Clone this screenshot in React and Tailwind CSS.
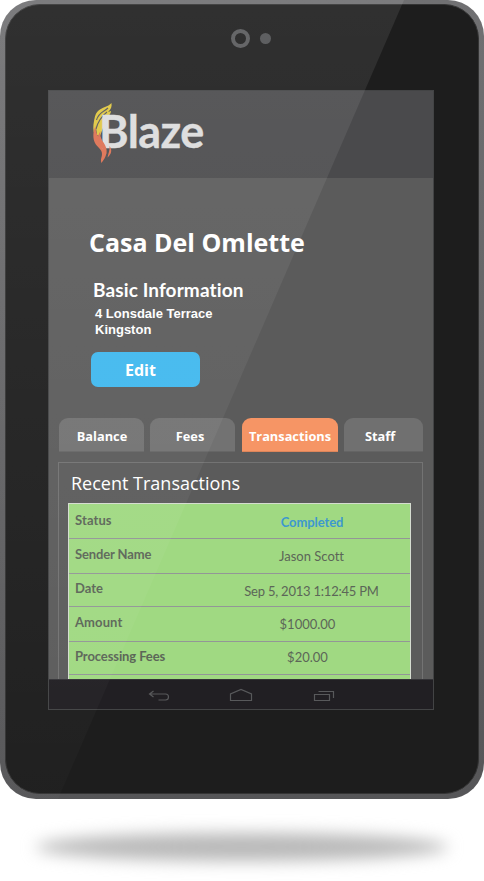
import React from 'react';

const rows = [
  { label: 'Status', value: 'Completed', h: 'h-[34px]', v: 'text-[#3d98cf] font-bold tracking-[-0.1px] pt-[8px] pr-[8px]', l: 'pt-[6px] tracking-[0.1px]' },
  { label: 'Sender Name', value: 'Jason Scott', h: 'h-[34px]', v: 'pt-[7px] pr-[9px]', l: 'pt-[5px] tracking-[-0.12px]' },
  { label: 'Date', value: 'Sep 5, 2013 1:12:45 PM', h: 'h-[32px]', v: 'pt-[7px] pr-[9px] tracking-[-0.22px]', l: 'pt-[4px]' },
  { label: 'Amount', value: '$1000.00', h: 'h-[34px]', v: 'pt-[7px] pr-[17px]', l: 'pt-[5px] tracking-[0.1px]' },
  { label: 'Processing Fees', value: '$20.00', h: 'h-[32px]', v: 'pt-[5px] pr-[17px]', l: 'pt-[4px] tracking-[-0.1px]' },
];

const tabs = [
  { name: 'Balance', style: 'w-[85px] mr-[6px] pl-[1px] bg-[#747474]/90' },
  { name: 'Fees', style: 'w-[85px] mr-[7px] pr-[5px] bg-[#747474]/90' },
  { name: 'Transactions', style: 'w-[96px] mr-[6px] bg-[#f69565]' },
  { name: 'Staff', style: 'w-[79px] pr-[7px] bg-[#707070]' },
];

function Logo() {
  return (
    <div className="relative ml-[44px] mt-[12px] h-[62px] w-[116px]">
      <svg className="absolute left-0 top-0" width="22" height="62" viewBox="0 0 22 62">
        <path fill="#dfc63f" d="M18.500 0C15 4 9 4 5 8C2 11 2 14 1 18C0 23 0 28 1.500 31L3 25L4 32L7 33L10 25L14 18L10 19C14 15 18 11 18 8L15 9C18 6 19 4 18.500 0Z" />
        <path fill="none" stroke="#58585a" strokeWidth="1.100" d="M15 5C11 9 6 9 3.500 17M14 9C9 13 5 18 3 26" />
        <path fill="#dd7051" d="M2.500 23C0 28 -0.500 35 2 40C4 44 9 46 9 51C9 54 7 57 8.500 60C11 56 14 53 13 49C12 44 7 41 6 36C5 32 2 29 2.500 23Z" />
      </svg>
      <span className="absolute left-[6px] top-[6px] font-[Lato] text-[45px] font-bold leading-[44px] tracking-[-0.55px] text-[#dcdcdd] [-webkit-text-stroke:0.4px_#dcdcdd]">Blaze</span>
      <svg className="absolute left-0 top-0" width="22" height="62" viewBox="0 0 22 62">
        <path fill="#dd7051" d="M7.500 28C6 34 10 38 12 42C14 46 14 49 13 52C10 49 11 46 7.500 43C4 38 4 33 7.500 28Z" />
        <path fill="#dd7051" d="M16.500 43C19.500 47 18.500 51 14.500 54.500C15.500 50 17 47 16.500 43Z" />
      </svg>
    </div>
  );
}

function NavBar() {
  return (
    <nav className="h-[30px] shrink-0 border-t border-[#343337] bg-[#211f23]">
      <svg width="383" height="29" viewBox="0 0 383 29" fill="none" stroke="#58595b" strokeWidth="1.2">
        <path d="M104.500 11L100.500 14L104.500 17M100.500 14H116.500Q119.500 14 119.500 17Q119.500 20 116.500 20H109.500" />
        <path d="M181.500 20.500V14L192 9.500L202.500 14V20.500Z" />
        <path d="M265.500 14.500H280.500V20.500H265.500ZM269.500 11.500H284.500V18" />
      </svg>
    </nav>
  );
}

function Screen() {
  return (
    <div className="flex h-[620px] w-[386px] flex-col overflow-hidden border border-[#434445] bg-[#5b5b5b] [font-variant-ligatures:none]">
      <header className="h-[87px] shrink-0 bg-[#4a4a4c]">
        <div className="flex"><Logo /></div>
      </header>
      <main className="min-h-0 flex-1 overflow-hidden text-white">
        <h1 className="ml-[40px] mt-[46px] whitespace-nowrap font-['Open_Sans'] text-[25px] font-bold leading-[36px]">Casa Del Omlette</h1>
        <h2 className="ml-[44px] mt-[18px] font-[Lato] text-[19px] font-bold leading-[24px] tracking-[0.12px]">Basic Information</h2>
        <p className="ml-[46px] mt-[4px] font-['Liberation_Sans'] text-[13px] font-bold leading-[16px]">4 Lonsdale Terrace<br />Kingston</p>
        <button className="ml-[42px] mt-[14px] block h-[35px] w-[109px] rounded-[7px] bg-[#40b8ee] pr-[10px] pt-[2px] text-center font-['Open_Sans'] text-[16px] font-bold leading-[33px]">Edit</button>
        <div className="ml-[10px] mt-[31px] flex h-[34px] font-['Open_Sans'] text-[12.8px] font-bold">
          {tabs.map((t) => (
            <div key={t.name} className={`flex items-center justify-center rounded-t-[9px] border-b border-black/10 pt-[4px] ${t.style}`}>{t.name}</div>
          ))}
        </div>
        <section className="ml-[9px] mt-[10px] h-[230px] w-[365px] border border-[#737373]">
          <h3 className="ml-[12px] mt-[7px] font-['Open_Sans'] text-[18px] leading-[26px]">Recent Transactions</h3>
          <div className="ml-[9px] mt-[7px] h-[210px] w-[343px] border border-[#d5dcd0] bg-[#a0d982]">
            {rows.map((r) => (
              <div key={r.label} className={`box-content flex border-b border-[#939697] font-[Lato] text-[13px] leading-[20px] text-[#5c6658] ${r.h}`}>
                <span className={`w-[153px] shrink-0 whitespace-nowrap pl-[6px] font-bold ${r.l}`}>{r.label}</span>
                <span className={`flex-1 whitespace-nowrap text-center ${r.v}`}>{r.value}</span>
              </div>
            ))}
          </div>
        </section>
      </main>
      <NavBar />
    </div>
  );
}

export default function App() {
  return (
    <div className="relative h-[881px] w-[484px] overflow-hidden bg-white">
      <div className="relative h-[799px] w-[484px] overflow-hidden rounded-[36px] bg-gradient-to-b from-[#707072] to-[#565658] px-[5px] pb-[5px] pt-[4px]">
        <div className="h-[790px] rounded-[35px] border border-[#343434] bg-[#1d1d1d]">
          <div className="ml-[225px] flex h-[67px] items-center gap-[10px]">
            <i className="size-[19px] rounded-full border-4 border-[#58595b]" />
            <i className="size-[11px] rounded-full bg-[#505153]" />
          </div>
          <div className="ml-[42px] mt-[18px]"><Screen /></div>
        </div>
        <svg className="pointer-events-none absolute left-0 top-0" width="484" height="799" viewBox="0 0 484 799">
          <defs>
            <linearGradient id="glare" x1="0" y1="0" x2="0" y2="1">
              <stop offset="0" stopColor="#fff" stopOpacity=".085" />
              <stop offset="1" stopColor="#fff" stopOpacity=".015" />
            </linearGradient>
          </defs>
          <path d="M0 0H404L58 799H0Z" fill="url(#glare)" />
        </svg>
      </div>
      <div className="absolute left-[36px] top-[833px] h-[28px] w-[412px] rounded-[50%] bg-[#b9b9b9] blur-[8px]" />
    </div>
  );
}
